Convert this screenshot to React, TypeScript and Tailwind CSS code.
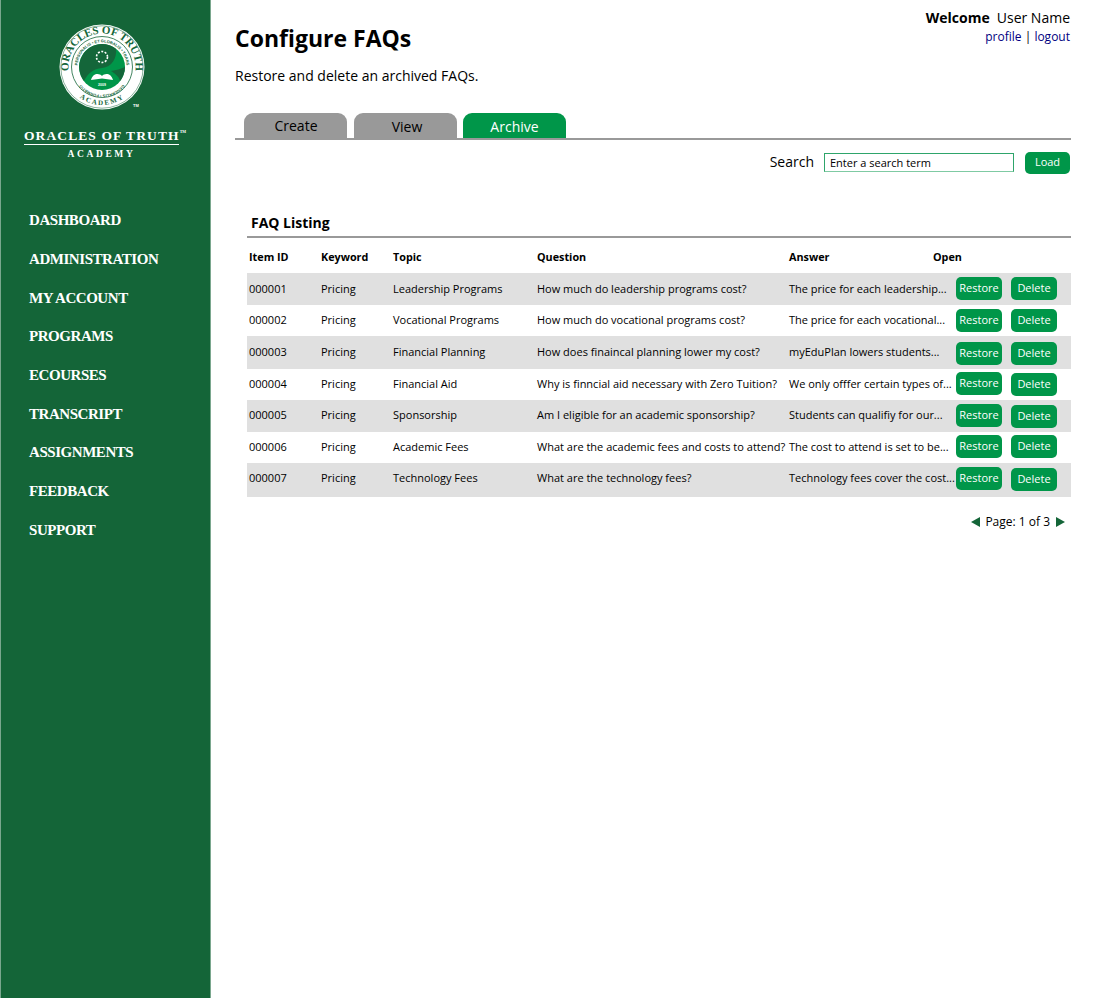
const navItems = [
  'DASHBOARD',
  'ADMINISTRATION',
  'MY ACCOUNT',
  'PROGRAMS',
  'ECOURSES',
  'TRANSCRIPT',
  'ASSIGNMENTS',
  'FEEDBACK',
  'SUPPORT',
];

const rows = [
  { id: '000001', topic: 'Leadership Programs', question: 'How much do leadership programs cost?', answer: 'The price for each leadership...', h: 'h-[32px]', grey: true, restore: 'mt-[4px]', del: 'mt-[4px]', lh: 'leading-[31px]' },
  { id: '000002', topic: 'Vocational Programs', question: 'How much do vocational programs cost?', answer: 'The price for each vocational...', h: 'h-[31px]', grey: false, restore: 'mt-[4px]', del: 'mt-[4px]', lh: 'leading-[30px]' },
  { id: '000003', topic: 'Financial Planning', question: 'How does finaincal planning lower my cost?', answer: 'myEduPlan lowers students...', h: 'h-[33px]', grey: true, restore: 'mt-[6px]', del: 'mt-[6px]', lh: 'leading-[31px]' },
  { id: '000004', topic: 'Financial Aid', question: 'Why is finncial aid necessary with Zero Tuition?', answer: 'We only offfer certain types of...', h: 'h-[31px]', grey: false, restore: 'mt-[3px]', del: 'mt-[4px]', lh: 'leading-[30px]' },
  { id: '000005', topic: 'Sponsorship', question: 'Am I eligible for an academic sponsorship?', answer: 'Students can qualifiy for our...', h: 'h-[32px]', grey: true, restore: 'mt-[4px]', del: 'mt-[5px]', lh: 'leading-[30px]' },
  { id: '000006', topic: 'Academic Fees', question: 'What are the academic fees and costs to attend?', answer: 'The cost to attend is set to be...', h: 'h-[31px]', grey: false, restore: 'mt-[3px]', del: 'mt-[3px]', lh: 'leading-[30px]' },
  { id: '000007', topic: 'Technology Fees', question: 'What are the technology fees?', answer: 'Technology fees cover the cost...', h: 'h-[34px]', grey: true, restore: 'mt-[4px]', del: 'mt-[5px]', lh: 'leading-[30px]' },
];

function Logo() {
  return (
    <svg width="88" height="92" viewBox="0 0 88 92" className="block">
      <defs>
        <path id="arc-top" d="M 11.5 54.5 A 33.5 33.5 0 1 1 74.5 54.5" />
        <path id="arc-bottom" d="M 18.6 72.1 A 38 38 0 0 0 67.4 72.1" />
        <path id="arc-inner" d="M 19.9 51.4 A 24.6 24.6 0 1 1 66.1 51.4" />
        <path id="arc-inner-b" d="M 67.5 55 A 27 27 0 0 1 18.5 55" />
      </defs>
      <circle cx="43" cy="43" r="42.5" fill="#ffffff" />
      <circle cx="43" cy="43" r="41.2" fill="none" stroke="#14663a" strokeWidth="0.5" />
      <circle cx="43" cy="43" r="30.5" fill="#ffffff" stroke="#14663a" strokeWidth="0.8" />
      <circle cx="43" cy="43" r="23" fill="#009649" />
      <path d="M 43 20 A 23 23 0 0 0 25 57 C 29 49 34 45 43 44 C 53 43 58 34 57 25 A 23 23 0 0 0 43 20 Z" fill="#14663a" />
      <path d="M 66 43 A 23 23 0 0 1 61 57 C 60 52 55 49 52 47 C 57 46 62 45 66 43 Z" fill="#14663a" />
      <text fontFamily="'Liberation Serif', serif" fontWeight="700" fontSize="11" fill="#14663a">
        <textPath href="#arc-top" startOffset="50%" textAnchor="middle">ORACLES OF TRUTH</textPath>
      </text>
      <text fontFamily="'Liberation Serif', serif" fontWeight="700" fontSize="7" fill="#14663a" letterSpacing="1.6">
        <textPath href="#arc-bottom" startOffset="50%" textAnchor="middle">ACADEMY</textPath>
      </text>
      <text fontFamily="'Liberation Sans', sans-serif" fontWeight="700" fontSize="4" fill="#14663a">
        <textPath href="#arc-inner" startOffset="50%" textAnchor="middle">PERSONALIS • ET GLOBALIS • TRANS</textPath>
      </text>
      <text fontFamily="'Liberation Sans', sans-serif" fontWeight="700" fontSize="4" fill="#14663a">
        <textPath href="#arc-inner-b" startOffset="50%" textAnchor="middle">GENERALIS • FORMATIO</textPath>
      </text>
      <circle cx="43" cy="33" r="5.5" fill="none" stroke="#ffffff" strokeWidth="1.6" strokeDasharray="2 1.5" />
      <path d="M 32 56 C 34 49 40 49 43 52 C 46 49 52 49 54 56 L 43 54.5 Z" fill="#ffffff" />
      <text x="43" y="62" textAnchor="middle" fontFamily="'Liberation Sans', sans-serif" fontSize="3.5" fontWeight="700" fill="#ffffff">2009</text>
      <text x="74" y="83" fontFamily="'Liberation Sans', sans-serif" fontSize="4" fontWeight="700" fill="#ffffff">TM</text>
    </svg>
  );
}

function Sidebar() {
  return (
    <aside className="flex w-[211px] shrink-0 flex-col border-x border-x-[#7aa78e] bg-[#146538] pb-[10px]">
      <div className="mt-[24px] ml-[58px]">
        <Logo />
      </div>
      <div className="mt-[12px] flex flex-col items-center pr-[8px] font-['Liberation_Serif',serif] font-bold text-white">
        <div className="flex h-[17px] w-[155px] items-start border-b border-b-white text-[13.5px] leading-[15px] tracking-[1.1px] whitespace-nowrap">
          ORACLES OF TRUTH<span className="text-[4px] leading-[7px] tracking-normal">TM</span>
        </div>
        <div className="mt-[3px] text-[9.5px] leading-[13px] tracking-[2.6px]">ACADEMY</div>
      </div>
      <nav className="mt-[49.3px] ml-[28px] flex flex-col font-['Liberation_Serif',serif] text-[15px] leading-[20px] font-bold tracking-[-0.45px] text-white">
        {navItems.map((item) => (
          <a key={item} className="mb-[18.67px] block">
            {item}
          </a>
        ))}
      </nav>
    </aside>
  );
}

function GreenButton({ label, className }: { label: string; className: string }) {
  return (
    <button className={`h-[23px] w-[46px] rounded-[5px] bg-[#009649] pb-[2px] text-center text-[11px] leading-[15px] text-white ${className}`}>
      {label}
    </button>
  );
}

function Tab({ label, active, className }: { label: string; active?: boolean; className: string }) {
  return (
    <div
      className={`h-[25px] w-[103px] rounded-t-[9px] text-center text-[14px] ${
        active ? 'bg-[#009649] text-white' : 'bg-[#999999] text-black'
      } ${className}`}
    >
      {label}
    </div>
  );
}

function Listing() {
  return (
    <div className="mt-[38px] ml-[12px] w-[824px] text-[11px] text-black">
      <h2 className="h-[26px] border-b-2 border-b-[#999999] pl-[4px] text-[14px] leading-[21px] font-bold">
        FAQ Listing
      </h2>
      <div className="flex h-[35px] items-center pt-[4px] pl-[2px] text-[10.8px] font-bold">
        <span className="w-[72px]">Item ID</span>
        <span className="w-[72px]">Keyword</span>
        <span className="w-[144px]">Topic</span>
        <span className="w-[252px]">Question</span>
        <span className="w-[144px]">Answer</span>
        <span>Open</span>
      </div>
      {rows.map((row) => (
        <div key={row.id} className={`flex items-start pl-[2px] ${row.h} ${row.lh} ${row.grey ? 'bg-[#e0e0e0]' : 'bg-white'}`}>
          <span className="w-[72px]">{row.id}</span>
          <span className="w-[72px]">Pricing</span>
          <span className="w-[144px]">{row.topic}</span>
          <span className="w-[252px] whitespace-nowrap">{row.question}</span>
          <span className="w-[167px] whitespace-nowrap">{row.answer}</span>
          <GreenButton label="Restore" className={row.restore} />
          <GreenButton label="Delete" className={`ml-[9px] ${row.del}`} />
        </div>
      ))}
      <div className="mt-[16px] flex items-center justify-end pr-[6px] text-[12px] leading-[17px]">
        <svg width="9" height="10" viewBox="0 0 9 10" className="mr-[5px]">
          <path d="M9 0 L0 5 L9 10 Z" fill="#146538" />
        </svg>
        <span>Page: 1 of 3</span>
        <svg width="9" height="10" viewBox="0 0 9 10" className="ml-[6px]">
          <path d="M0 0 L9 5 L0 10 Z" fill="#146538" />
        </svg>
      </div>
    </div>
  );
}

export default function App() {
  return (
    <div className="flex min-h-screen bg-white font-['Open_Sans',sans-serif] text-black">
      <Sidebar />
      <main className="box-content w-[836px] pl-[24px]">
        <div className="flex items-start justify-between pr-[1px]">
          <h1 className="mt-[22px] text-[23px] leading-[33px] font-bold">Configure FAQs</h1>
          <div className="mt-[8px] text-right">
            <div className="text-[14px] leading-[19px]">
              <span className="mr-[7px] font-bold">Welcome</span>User Name
            </div>
            <div className="text-[12px] leading-[19px]">
              <a className="text-[#000080]">profile</a> | <a className="text-[#000080]">logout</a>
            </div>
          </div>
        </div>
        <p className="mt-[11px] text-[14px] leading-[19px]">Restore and delete an archived FAQs.</p>
        <div className="mt-[28px] flex h-[27px] items-start border-b-2 border-b-[#999999] pl-[9px]">
          <Tab label="Create" className="pl-[1px] leading-[26px]" />
          <Tab label="View" className="ml-[7px] pl-[3px] leading-[28px]" />
          <Tab label="Archive" active className="ml-[6px] leading-[28px]" />
        </div>
        <div className="mt-[12px] flex items-start justify-end pr-[1px]">
          <span className="mr-[10px] text-[14px] leading-[19px]">Search</span>
          <input
            readOnly
            value="Enter a search term"
            className="mt-[1px] h-[19px] w-[190px] border border-[#2ea56b] border-b-[#7fcaa3] px-[5px] text-[11px] text-black outline-none"
          />
          <button className="ml-[11px] h-[22px] w-[45px] rounded-[5px] bg-[#009649] pb-[2px] text-center text-[11px] text-white">
            Load
          </button>
        </div>
        <Listing />
      </main>
    </div>
  );
}
